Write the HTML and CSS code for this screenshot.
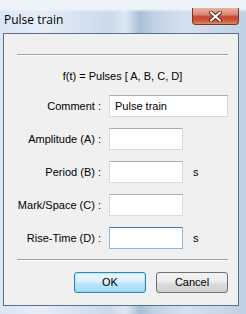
FILE: index.html
```html
<!DOCTYPE html>
<html>
<head>
<meta charset="utf-8">
<link rel="stylesheet" href="styles.css">
</head>
<body>
<div class="window">
  <div class="titlebar">
    <span class="title">Pulse train</span>
    <div class="close">
      <svg width="17" height="11" viewBox="0 0 17 11">
        <path d="M4 1.5 L13 9.5 M13 1.5 L4 9.5" stroke="#5a1d14" stroke-width="4" stroke-linecap="round"/>
        <path d="M4 1.5 L13 9.5 M13 1.5 L4 9.5" stroke="#ffffff" stroke-width="2.2" stroke-linecap="round"/>
      </svg>
    </div>
  </div>
  <div class="client">
    <div class="sep"></div>
    <div class="formula">f(t) = Pulses [ A, B, C, D]</div>
    <div class="form">
      <label class="lbl">Comment :</label>
      <div class="field wide">Pulse train</div>

      <label class="lbl">Amplitude (A) :</label>
      <div class="field"></div>
      <span class="unit"></span>

      <label class="lbl">Period (B) :</label>
      <div class="field"></div>
      <span class="unit">s</span>

      <label class="lbl">Mark/Space (C) :</label>
      <div class="field"></div>
      <span class="unit"></span>

      <label class="lbl">Rise-Time (D) :</label>
      <div class="field focus"></div>
      <span class="unit">s</span>
    </div>
    <div class="sep sep2"></div>
    <div class="buttons">
      <div class="btn default">OK</div>
      <div class="btn">Cancel</div>
    </div>
  </div>
</div>
</body>
</html>
```
FILE: styles.css
```css
html, body {
  margin: 0;
  padding: 0;
}
body {
  width: 246px;
  height: 314px;
  overflow: hidden;
  font-family: "Liberation Sans", Arial, sans-serif;
}
.window {
  width: 246px;
  height: 314px;
  box-sizing: border-box;
  padding: 0 7px 8px 3px;
  display: flex;
  flex-direction: column;
  background:
    linear-gradient(180deg, #eef3fa 0px, #eef3fa 9px, rgba(255,255,255,0) 12px),
    linear-gradient(90deg, #d9e6f4 0px, #e6eef8 40px, #c9d9eb 110px, #dde8f4 125px, #a8bfd8 140px, #c2d3e7 155px, #d3e0ef 185px, #c0d1e5 246px);
}
.titlebar {
  height: 33px;
  display: flex;
  justify-content: space-between;
  align-items: flex-start;
  flex: none;
}
.title {
  margin-top: 12px;
  margin-left: 1px;
  font-family: "Open Sans", "Noto Sans", sans-serif;
  font-size: 12px;
  line-height: 16px;
  color: #000;
}
.close {
  margin-top: 8px;
  margin-right: 0;
  width: 47px;
  height: 17px;
  box-sizing: border-box;
  border: 1px solid #7a3428;
  border-top: none;
  border-radius: 0 0 4px 4px;
  background: linear-gradient(180deg, #eab2a4 0%, #d98a77 40%, #c7462f 55%, #cf5a3e 80%, #e08a66 100%);
  display: flex;
  align-items: center;
  justify-content: center;
}
.close svg {
  display: block;
}
.client {
  flex: 1;
  border: 1px solid #5e6f85;
  background: #f0f0f0;
  padding: 20px 10px 0 13px;
  display: flex;
  flex-direction: column;
}
.sep {
  height: 0;
  border-top: 1px solid #a0a0a0;
  border-bottom: 1px solid #ffffff;
}
.formula {
  margin-top: 13px;
  font-size: 11px;
  line-height: 14px;
  text-align: center;
  color: #000;
}
.form {
  margin-top: 12px;
  display: grid;
  grid-template-columns: 84px 74px auto;
  column-gap: 8px;
  row-gap: 11px;
  grid-auto-rows: 22px;
  align-items: center;
}
.lbl {
  font-size: 11px;
  text-align: right;
  color: #000;
  white-space: nowrap;
}
.field {
  height: 22px;
  box-sizing: border-box;
  background: #fff;
  border: 1px solid #d6dbe3;
  border-top-color: #abadb3;
  font-size: 11px;
  line-height: 20px;
  padding-left: 5px;
  color: #000;
}
.field.wide {
  grid-column: 2 / 4;
}
.field.focus {
  border-color: #8fb7dc;
  border-top-color: #3d7bad;
}
.unit {
  font-size: 11px;
  color: #000;
  padding-left: 2px;
}
.sep2 {
  margin-top: 10px;
}
.buttons {
  margin-top: 11px;
  display: flex;
  justify-content: flex-end;
  gap: 10px;
}
.btn {
  width: 72px;
  height: 21px;
  box-sizing: border-box;
  border: 1px solid #707070;
  border-radius: 3px;
  background: linear-gradient(180deg, #f2f2f2 0%, #ebebeb 48%, #dddddd 52%, #cfcfcf 100%);
  font-size: 11px;
  line-height: 19px;
  text-align: center;
  color: #000;
}
.btn.default {
  border-color: #3c7fb1;
  background: linear-gradient(180deg, #eaf6fd 0%, #d9f0fc 48%, #bee6fd 52%, #a7d9f5 100%);
  box-shadow: inset 0 0 0 1px #48d7fb55;
}
```
